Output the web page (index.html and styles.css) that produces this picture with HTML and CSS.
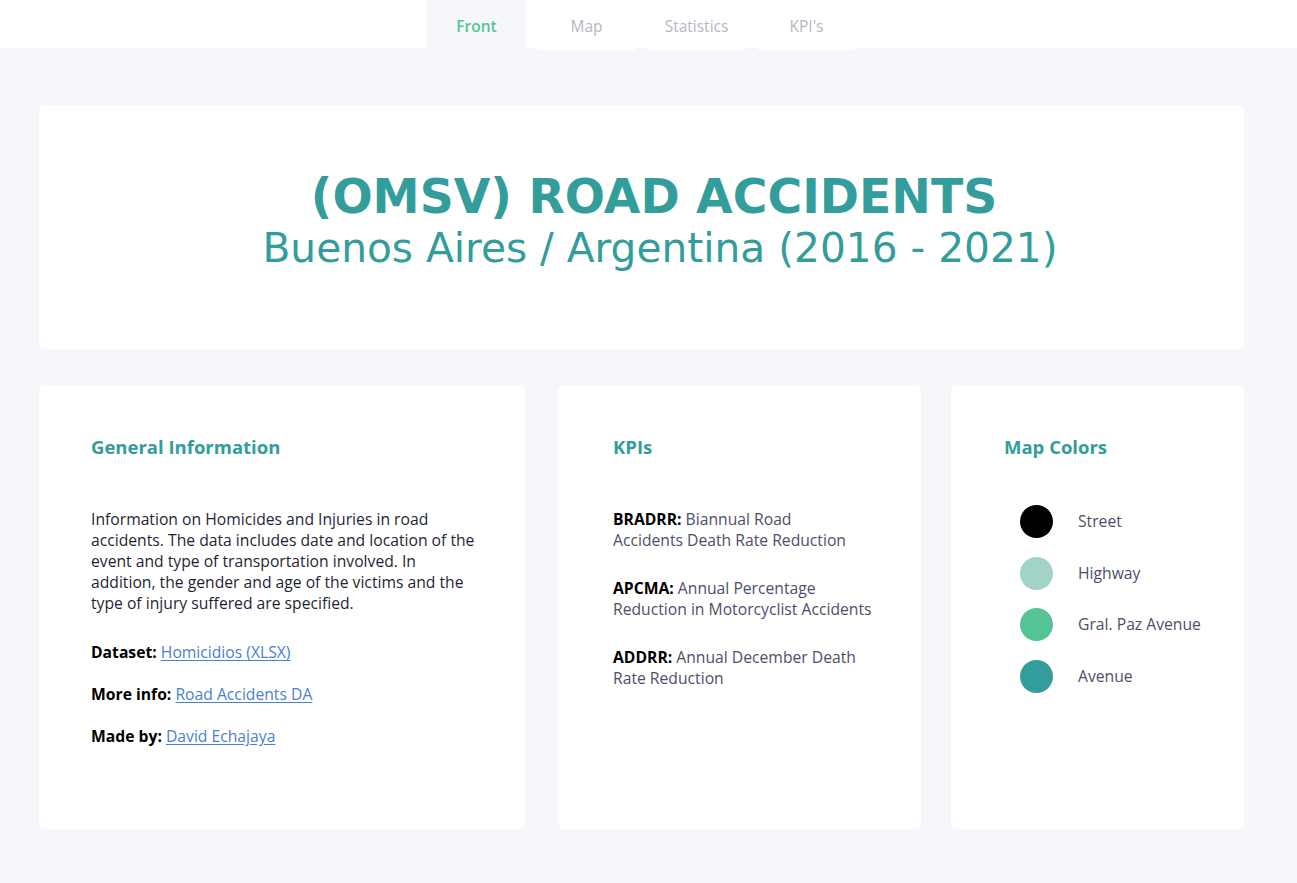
FILE: index.html
```html
<!DOCTYPE html>
<html lang="en">
<head>
<meta charset="utf-8">
<title>(OMSV) Road Accidents</title>
<link rel="stylesheet" href="styles.css">
</head>
<body>
<header class="tabbar">
  <nav class="tabs">
    <a class="tab active">Front</a>
    <a class="tab">Map</a>
    <a class="tab">Statistics</a>
    <a class="tab">KPI's</a>
  </nav>
</header>
<main class="page">
  <section class="hero">
    <h1 class="hero-title">(OMSV) ROAD ACCIDENTS</h1>
    <p class="hero-sub">Buenos Aires / Argentina (2016 - 2021)</p>
  </section>
  <div class="cards">
    <section class="card card-info">
      <h2 class="card-title">General Information</h2>
      <p class="desc">Information on Homicides and Injuries in road<br>accidents. The data includes date and location of the<br>event and type of transportation involved. In<br>addition, the gender and age of the victims and the<br>type of injury suffered are specified.</p>
      <p class="meta first"><b>Dataset:</b> <a href="#">Homicidios (XLSX)</a></p>
      <p class="meta"><b>More info:</b> <a href="#">Road Accidents DA</a></p>
      <p class="meta"><b>Made by:</b> <a href="#">David Echajaya</a></p>
    </section>
    <section class="card card-kpi">
      <h2 class="card-title">KPIs</h2>
      <p class="kpi first"><b>BRADRR:</b> Biannual Road<br>Accidents Death Rate Reduction</p>
      <p class="kpi"><b>APCMA:</b> Annual Percentage<br>Reduction in Motorcyclist Accidents</p>
      <p class="kpi"><b>ADDRR:</b> Annual December Death<br>Rate Reduction</p>
    </section>
    <section class="card card-colors">
      <h2 class="card-title">Map Colors</h2>
      <ul class="legend">
        <li class="legend-row"><span class="dot dot-street"></span><span class="legend-label">Street</span></li>
        <li class="legend-row"><span class="dot dot-highway"></span><span class="legend-label">Highway</span></li>
        <li class="legend-row"><span class="dot dot-gralpaz"></span><span class="legend-label">Gral. Paz Avenue</span></li>
        <li class="legend-row"><span class="dot dot-avenue"></span><span class="legend-label">Avenue</span></li>
      </ul>
    </section>
  </div>
</main>
</body>
</html>
```

FILE: styles.css
```css
* { box-sizing: border-box; }
html, body { margin: 0; padding: 0; }
body {
  background: #f6f7fb;
  font-family: "Open Sans", "Noto Sans", sans-serif;
  font-size: 15.7px;
  color: #1f1f36;
}

.tabbar {
  background: #ffffff;
  height: 48px;
  display: flex;
  justify-content: center;
  padding-right: 14px;
}
.tabs {
  display: flex;
  gap: 11px;
  align-items: flex-start;
}
.tab {
  display: block;
  width: 99px;
  height: 50px;
  line-height: 52px;
  text-align: center;
  background: #ffffff;
  color: #b4b7c3;
  font-size: 15.5px;
  border-radius: 0 0 3px 3px;
  cursor: pointer;
}
.tab.active {
  background: #f6f7fb;
  color: #55c495;
  font-weight: 600;
  border-radius: 0;
}

.page {
  padding: 57px 53px 54px 39px;
}

.hero {
  background: #ffffff;
  border-radius: 6px;
  height: 244px;
  display: flex;
  flex-direction: column;
  align-items: center;
  justify-content: center;
  color: #339d9b;
  font-family: "DejaVu Sans", Verdana, sans-serif;
  padding: 0 0 12px 25px;
}
.hero-title {
  margin: 0;
  font-size: 47.3px;
  font-weight: 700;
  line-height: 54px;
}
.hero-sub {
  margin: 0;
  padding-left: 12px;
  font-size: 40.7px;
  line-height: 48px;
}

.cards {
  margin-top: 36px;
  display: flex;
  align-items: stretch;
}
.card {
  background: #ffffff;
  border-radius: 6px;
  height: 444px;
  padding-top: 50px;
  flex: none;
}
.card-info { width: 486px; padding-left: 52px; padding-right: 20px; }
.card-kpi { width: 363px; padding-left: 55px; padding-right: 10px; margin-left: 33px; }
.card-colors { width: 293px; padding-left: 53px; padding-right: 6px; margin-left: 30px; }

.card-title {
  margin: 0;
  font-size: 18.5px;
  font-weight: 700;
  line-height: 24px;
  color: #339d9b;
}

.desc {
  margin: 50px 0 0;
  line-height: 21px;
  white-space: nowrap;
}
.meta {
  margin: 21px 0 0;
  line-height: 21px;
  white-space: nowrap;
}
.meta.first { margin-top: 28px; }
.meta b, .kpi b { color: #000000; font-weight: 700; }
.meta a {
  color: #4a7fd3;
  text-decoration: underline;
  text-underline-offset: 2px;
}

.kpi {
  margin: 27px 0 0;
  line-height: 21px;
  color: #4e4e6b;
  white-space: nowrap;
}
.kpi.first { margin-top: 50px; }

.legend {
  list-style: none;
  margin: 46px 0 0;
  padding: 0 0 0 16px;
  display: flex;
  flex-direction: column;
  gap: 18.7px;
}
.legend-row {
  display: flex;
  align-items: center;
  gap: 25px;
  height: 33px;
}
.dot {
  width: 33px;
  height: 33px;
  border-radius: 50%;
  flex: none;
}
.dot-street { background: #000000; }
.dot-highway { background: #a1d3c6; }
.dot-gralpaz { background: #55c495; }
.dot-avenue { background: #339d9b; }
.legend-label {
  color: #4e4e6b;
  line-height: 21px;
}
```
